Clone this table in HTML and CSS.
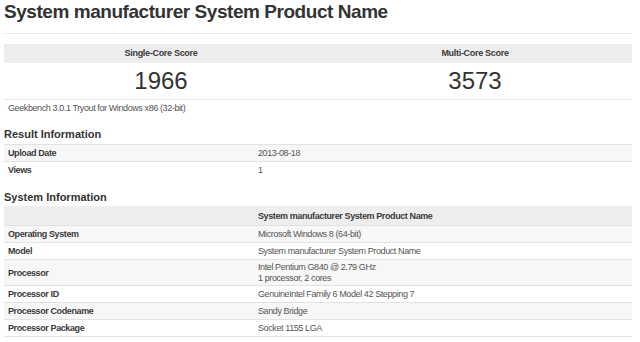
FILE: index.html
```html
<!DOCTYPE html>
<html>
<head>
<meta charset="utf-8">
<link rel="stylesheet" href="styles.css">
</head>
<body>
<div class="page">
  <h1 class="title">System manufacturer System Product Name</h1>

  <div class="scores">
    <div class="score-head">Single-Core Score</div>
    <div class="score-head">Multi-Core Score</div>
    <div class="score-num">1966</div>
    <div class="score-num">3573</div>
  </div>
  <div class="version">Geekbench 3.0.1 Tryout for Windows x86 (32-bit)</div>

  <h2 class="section">Result Information</h2>
  <div class="table">
    <div class="row odd"><div class="label">Upload Date</div><div class="value">2013-08-18</div></div>
    <div class="row"><div class="label">Views</div><div class="value">1</div></div>
  </div>

  <h2 class="section section-sys">System Information</h2>
  <div class="table table-last">
    <div class="row head"><div class="label"></div><div class="value head-value">System manufacturer System Product Name</div></div>
    <div class="row odd"><div class="label">Operating System</div><div class="value">Microsoft Windows 8 (64-bit)</div></div>
    <div class="row"><div class="label">Model</div><div class="value">System manufacturer System Product Name</div></div>
    <div class="row odd tall"><div class="label">Processor</div><div class="value multi">Intel Pentium G840 @ 2.79 GHz<br>1 processor, 2 cores</div></div>
    <div class="row"><div class="label">Processor ID</div><div class="value">GenuineIntel Family 6 Model 42 Stepping 7</div></div>
    <div class="row odd"><div class="label">Processor Codename</div><div class="value">Sandy Bridge</div></div>
    <div class="row"><div class="label">Processor Package</div><div class="value">Socket 1155 LGA</div></div>
  </div>
</div>
</body>
</html>
```

FILE: styles.css
```css
html, body {
  margin: 0;
  padding: 0;
  background: #fff;
}
body {
  font-family: "Liberation Sans", Arial, sans-serif;
  color: #333;
}
.page {
  width: 628px;
  padding-left: 4px;
}
.title {
  margin: 0;
  font-size: 19px;
  letter-spacing: -0.45px;
  line-height: 24px;
  font-weight: bold;
  color: #333;
  padding-bottom: 9px;
  border-bottom: 1px solid #eaeaea;
}
.scores {
  margin-top: 10px;
  display: grid;
  grid-template-columns: 314px 314px;
}
.score-head {
  background: #eeeeee;
  height: 19px;
  line-height: 19px;
  text-align: center;
  font-size: 9px;
  letter-spacing: -0.3px;
  font-weight: bold;
  color: #3a3a3a;
}
.score-num {
  height: 36px;
  line-height: 36px;
  text-align: center;
  font-size: 24px;
  color: #333;
  border-bottom: 1px solid #e5e5e5;
}
.version {
  padding-left: 4px;
  line-height: 16px;
  font-size: 9px;
  letter-spacing: -0.4px;
  color: #555;
}
.section {
  margin: 11px 0 3px;
  font-size: 11px;
  line-height: 14px;
  font-weight: bold;
  color: #333;
}
.section-sys {
  margin: 12px 0 2px;
}
.table {
  font-size: 9px;
  letter-spacing: -0.4px;
}
.row {
  display: grid;
  grid-template-columns: 250px 1fr;
  border-top: 1px solid #e2e2e2;
  min-height: 16px;
}
.row.odd {
  background: #f7f7f7;
}
.row.head {
  background: #eeeeee;
  min-height: 18px;
  border-top-color: #eeeeee;
}
.table-last .row:last-child {
  border-bottom: 1px solid #e2e2e2;
}
.label {
  padding: 0 4px;
  line-height: 16px;
  font-weight: bold;
  color: #3a3a3a;
  align-self: center;
}
.value {
  padding: 0 4px;
  line-height: 16px;
  color: #555;
  align-self: center;
}
.head-value {
  font-weight: bold;
  color: #3a3a3a;
  line-height: 18px;
}
.value.multi {
  line-height: 11px;
  padding-top: 1.5px;
  padding-bottom: 1.5px;
}
```
